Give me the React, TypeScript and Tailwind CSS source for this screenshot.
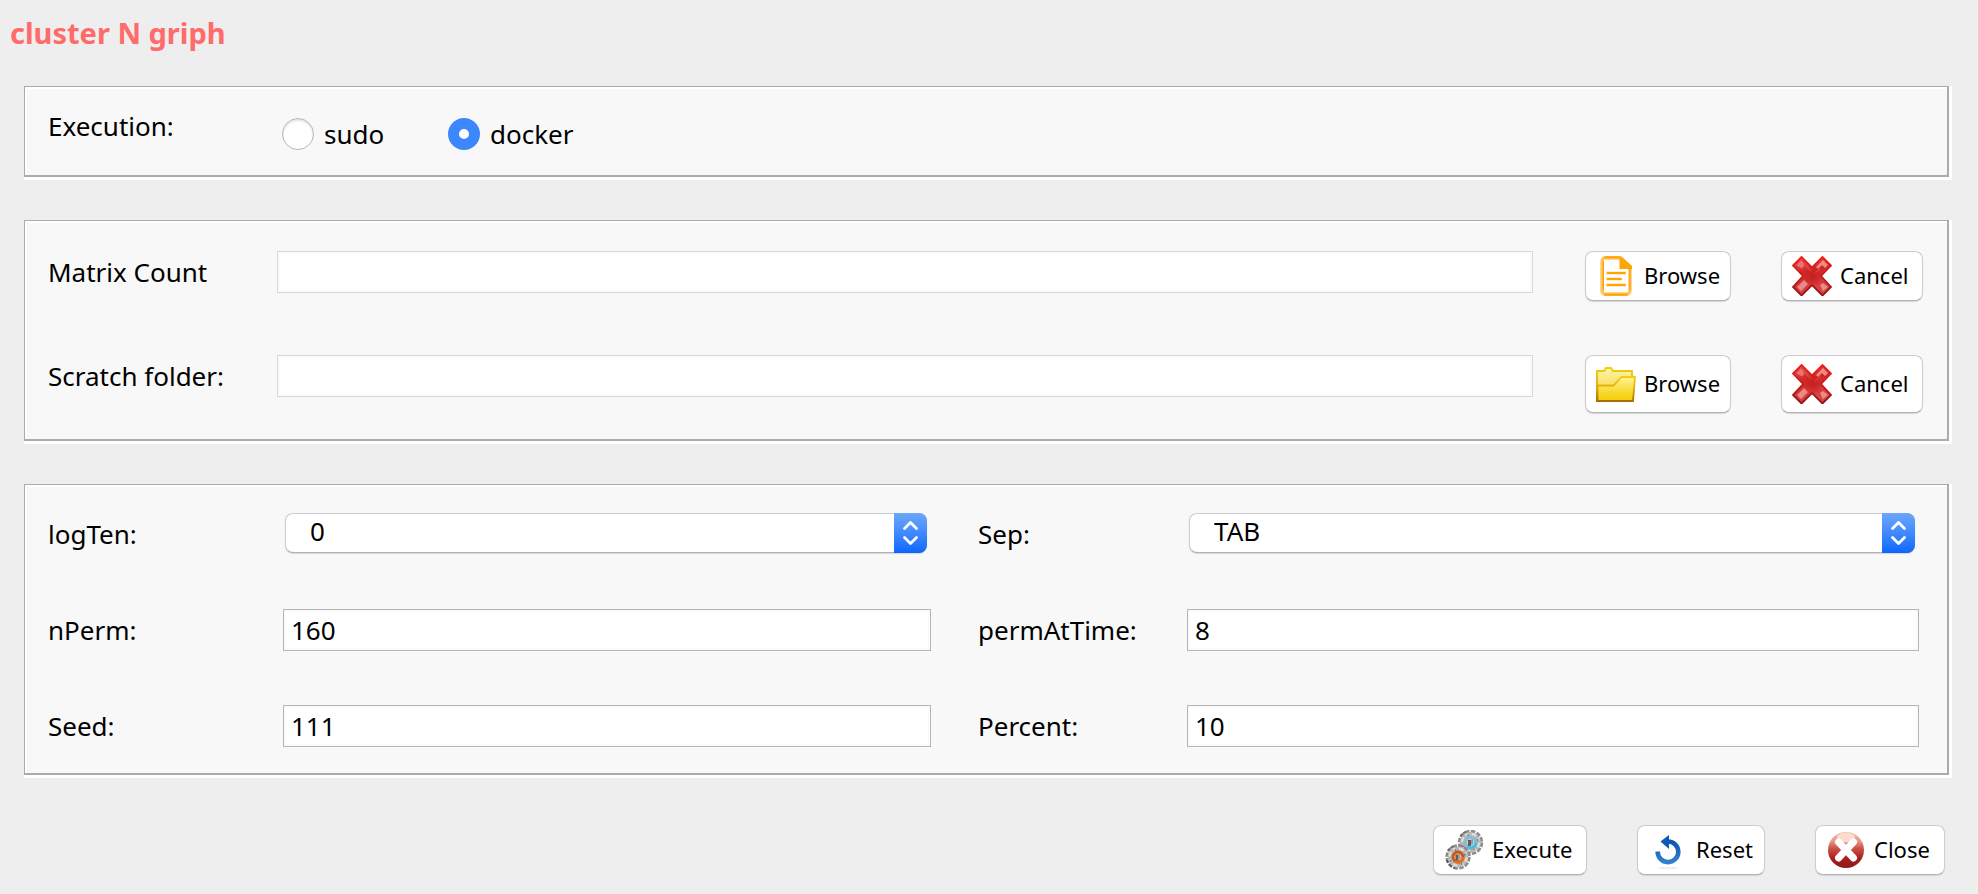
import { useState } from "react";
import type { ReactNode } from "react";

function Panel({ className, children }: { className: string; children: ReactNode }) {
  return (
    <div className="bg-white pr-[3px] pb-[3px]">
      <section
        className={`border-t border-r-2 border-b-2 border-l border-[#ababab] bg-[#f8f8f8] pl-[23px] shadow-[inset_2px_2px_0_#ffffff] ${className}`}
      >
        {children}
      </section>
    </div>
  );
}

function FileIcon() {
  return (
    <svg viewBox="0 0 40 40" className="size-10 shrink-0" aria-hidden="true">
      <path d="M9 2h15l10 10v22.500a3.500 3.500 0 0 1-3.500 3.500h-22A3.500 3.500 0 0 1 6 34.500V5A3 3 0 0 1 9 2z" fill="#fff" stroke="#ffc566" strokeWidth="3.400" />
      <path d="M9 1.200h14M9 38.800h22" stroke="#ffa500" strokeWidth="2" strokeLinecap="round" />
      <path d="M7.300 5v29.500M33.800 12v22.500" stroke="#ffa500" strokeWidth="1.400" />
      <path d="M23.500 0.500h2L36 10v3H23.500z" fill="#ffa500" />
      <path d="M10 17h20M10 23h16M10 29h20" stroke="#ffe7bd" strokeWidth="3.600" />
      <path d="M11.500 17h17.500M11.500 23h13.500M11.500 29h17.500" stroke="#ffa500" strokeWidth="2" strokeLinecap="round" />
    </svg>
  );
}

function FolderIcon() {
  return (
    <svg viewBox="0 0 40 40" className="size-10 shrink-0" aria-hidden="true">
      <defs>
        <linearGradient id="folder-back" x1="0" y1="0" x2="0" y2="1">
          <stop offset="0" stopColor="#fff3a6" />
          <stop offset="1" stopColor="#f3cf2e" />
        </linearGradient>
        <linearGradient id="folder-front" x1="0" y1="0" x2="0" y2="1">
          <stop offset="0" stopColor="#fff29a" />
          <stop offset="0.6" stopColor="#f9da32" />
          <stop offset="1" stopColor="#f5cc08" />
        </linearGradient>
        <linearGradient id="folder-edge" x1="0" y1="0" x2="0" y2="1">
          <stop offset="0" stopColor="#f1cf0c" />
          <stop offset="0.5" stopColor="#d9a90c" />
          <stop offset="1" stopColor="#a96c08" />
        </linearGradient>
      </defs>
      <path d="M1 7h7l2-3h5l2 3h19v30H1z" fill="url(#folder-back)" stroke="url(#folder-edge)" strokeWidth="1.800" />
      <path d="M1.500 21.500h16l8-8.500h13.500L37 37H1.500z" fill="url(#folder-front)" stroke="url(#folder-edge)" strokeWidth="1.800" />
    </svg>
  );
}

function CrossIcon() {
  return (
    <svg viewBox="0 0 40 40" className="size-10 shrink-0" aria-hidden="true">
      <defs>
        <linearGradient id="cross-fill" x1="0" y1="0" x2="0.300" y2="1">
          <stop offset="0" stopColor="#ec5450" />
          <stop offset="0.450" stopColor="#cf2626" />
          <stop offset="1" stopColor="#d84646" />
        </linearGradient>
        <linearGradient id="cross-edge" x1="0" y1="0" x2="0" y2="1">
          <stop offset="0" stopColor="#f02018" />
          <stop offset="0.500" stopColor="#c41a1a" />
          <stop offset="1" stopColor="#8e1616" />
        </linearGradient>
        <radialGradient id="cross-core">
          <stop offset="0" stopColor="#c81e20" />
          <stop offset="1" stopColor="#c81e20" stopOpacity="0" />
        </radialGradient>
      </defs>
      <path d="M9.500 1L20 11.500 30.500 1 39 9.500 29 20l10 11-8.500 8.500L20 29 9.500 39.500 1 31l10-11L1 9.500z" fill="url(#cross-fill)" stroke="url(#cross-edge)" strokeWidth="1.800" />
      <path d="M5 31l7-7 4 4-7 7zM28 29l3-2 5 4-5 4z" fill="#f3a9a9" opacity="0.700" />
      <path d="M4.500 9.500l4.500-5 4 4-3 4z" fill="#f28a86" opacity="0.700" />
      <path d="M24 11l7-7 5 5-3 3-3-3-4 4z" fill="#fab4b0" opacity="0.700" />
      <path d="M12 7l7 8M28 13l-6 5" stroke="#e04442" strokeWidth="2" />
      <circle cx="21" cy="20" r="10" fill="url(#cross-core)" />
    </svg>
  );
}

function Gear({ cx, cy, ring, glow }: { cx: number; cy: number; ring: string; glow: string }) {
  return (
    <g transform={`translate(${cx} ${cy})`}>
      <circle r="11.200" fill="none" stroke="#8b8b8b" strokeWidth="3" strokeDasharray="4.400 1.465" />
      <path d="M-11 3A11.500 11.500 0 0 0-3 11" fill="none" stroke="#5a5a5a" strokeWidth="2" strokeDasharray="3 2" />
      <path d="M-10-6A12 12 0 0 1-4-11" fill="none" stroke="#666" strokeWidth="2" strokeDasharray="2.500 2" />
      <circle r="10.400" fill="#b4b4b4" />
      <circle r="8.600" fill="none" stroke="#dcdcdc" strokeWidth="2.400" strokeDasharray="5 2.500 3 3.300" />
      <path d="M-8.500 4.500l2-1M4 8l-1-2M8-3l-2 1M-3-8l1 2" stroke="#7c7c7c" strokeWidth="1.400" />
      <circle r="5" fill="#d6d6d6" stroke={ring} strokeWidth="2.800" />
      <path d="M-3 4.500A5.500 5.500 0 0 0 5.500 0" stroke={glow} strokeWidth="2.400" fill="none" />
      <path d="M-2.500-2.500h3v6h-3z" fill="#6b5a52" />
      <path d="M0.500-3h2v5h-2z" fill="#9a9a9a" />
    </g>
  );
}

function GearsIcon() {
  return (
    <svg viewBox="0 0 40 40" className="size-10 shrink-0" aria-hidden="true">
      <Gear cx={26.500} cy={12.500} ring="#84bfd6" glow="#35bdf0" />
      <Gear cx={14} cy={27} ring="#cf5612" glow="#ee6c1c" />
    </svg>
  );
}

function ResetIcon() {
  return (
    <svg viewBox="0 0 40 40" className="size-10 shrink-0" aria-hidden="true">
      <defs>
        <linearGradient id="reset-fill" x1="0" y1="0" x2="0" y2="1">
          <stop offset="0" stopColor="#0a58b0" />
          <stop offset="1" stopColor="#3380cc" />
        </linearGradient>
      </defs>
      <ellipse cx="20" cy="38" rx="10" ry="1.300" fill="#efefef" />
      <path d="M20 11.500a10.300 10.300 0 1 1-10.300 10" fill="none" stroke="url(#reset-fill)" strokeWidth="4.600" />
      <path d="M21 5v14L12.500 11.500z" fill="#0c5ab3" />
    </svg>
  );
}

function CloseIcon() {
  return (
    <svg viewBox="0 0 40 40" className="size-10 shrink-0" aria-hidden="true">
      <defs>
        <linearGradient id="close-fill" x1="0" y1="0" x2="0" y2="1">
          <stop offset="0" stopColor="#f6b9a4" />
          <stop offset="0.250" stopColor="#e59a86" />
          <stop offset="0.450" stopColor="#cc5446" />
          <stop offset="0.750" stopColor="#a81c1a" />
          <stop offset="1" stopColor="#8c1c1a" />
        </linearGradient>
      </defs>
      <circle cx="20" cy="20" r="18" fill="url(#close-fill)" />
      <ellipse cx="20" cy="7.500" rx="9" ry="5" fill="#fddccd" />
      <path d="M12.500 12l15 16M27.500 12l-15 16" stroke="#fff" strokeWidth="7" strokeLinecap="round" />
    </svg>
  );
}

function PushButton({ icon, label, className }: { icon: ReactNode; label: string; className: string }) {
  return (
    <button
      type="button"
      className={`flex shrink-0 items-center gap-2 rounded-lg border border-[#cdcdcd] border-b-[#b4b4b4] bg-white pb-px pl-[10px] text-[22px] leading-7 whitespace-nowrap shadow-[0_1px_1px_#d5d5d5] ${className}`}
    >
      {icon}
      <span className="pb-0.5">{label}</span>
    </button>
  );
}

function FileRow({ id, label, icon, buttonHeight }: { id: string; label: string; icon: ReactNode; buttonHeight: string }) {
  return (
    <div className="flex items-start">
      <label htmlFor={id} className="w-[229px] shrink-0 leading-[42px]">
        {label}
      </label>
      <input
        id={id}
        type="text"
        className="h-[42px] min-w-0 flex-1 border border-[#d8d8d8] bg-white px-2 shadow-[inset_0_0_0_2px_#fbfbfb] outline-none"
      />
      <PushButton icon={icon} label="Browse" className={`ml-[52px] w-[146px] ${buttonHeight}`} />
      <PushButton icon={<CrossIcon />} label="Cancel" className={`ml-[50px] w-[142px] ${buttonHeight}`} />
    </div>
  );
}

function TextField({ id, value }: { id: string; value: string }) {
  return (
    <input
      id={id}
      type="text"
      defaultValue={value}
      className="h-[42px] w-full min-w-0 border border-[#b6b6b6] bg-white px-[7px] shadow-[inset_0_0_0_2px_#fafafa] outline-none"
    />
  );
}

function SelectField({ id, options }: { id: string; options: string[] }) {
  return (
    <div className="relative mr-1 ml-0.5 h-10">
      <select
        id={id}
        className="block h-10 w-full appearance-none rounded-lg border border-[#cdcdcd] border-b-[#b0b0b0] bg-white pr-10 pb-1 pl-6 leading-[34px] shadow-[0_1px_1px_#d8d8d8] outline-none"
      >
        {options.map((option) => (
          <option key={option}>{option}</option>
        ))}
      </select>
      <span className="pointer-events-none absolute inset-y-0 right-0 flex w-[33px] items-center justify-center rounded-r-lg bg-linear-to-b from-[#6ba6fb] to-[#0767fd]">
        <svg viewBox="0 0 33 40" className="h-10 w-[33px]" fill="none" stroke="#fff" strokeWidth="2.800" strokeLinecap="round" strokeLinejoin="round" aria-hidden="true">
          <path d="M10.500 15.500l6-6 6 6M10.500 24.500l6 6 6-6" />
        </svg>
      </span>
    </div>
  );
}

const modes = ["sudo", "docker"];

export default function App() {
  const [mode, setMode] = useState("docker");

  return (
    <main className="min-h-screen bg-[#eeeeee] pt-[13px] pr-[26px] pb-4 pl-6 font-['Noto_Sans',sans-serif] text-[26px] text-black">
      <h1 className="-ml-3.5 text-[29px] leading-10 font-bold text-[#ff6b6b]">cluster N griph</h1>

      <form className="mt-[33px] flex flex-col gap-10" onSubmit={(event) => event.preventDefault()}>
        <Panel className="flex items-start pt-[23px] pb-[25px]">
          <span id="execution-label" className="w-[234px] shrink-0 leading-8">
            Execution:
          </span>
          <div role="radiogroup" aria-labelledby="execution-label" className="mt-2 flex">
            {modes.map((name) => (
              <label key={name} className="flex w-[166px] items-center gap-2.5 leading-8">
                <input
                  type="radio"
                  name="mode"
                  value={name}
                  checked={mode === name}
                  onChange={() => setMode(name)}
                  className="size-8 shrink-0 appearance-none rounded-full border border-[#b8b8b8] bg-white shadow-[inset_0_2px_2px_#e4e4e4] checked:border-[11px] checked:border-[#3b88fd] checked:shadow-none"
                />
                {name}
              </label>
            ))}
          </div>
        </Panel>

        <Panel className="flex flex-col gap-[54px] pt-[30px] pr-6 pb-[26px]">
          <FileRow id="matrix" label="Matrix Count" icon={<FileIcon />} buttonHeight="h-[50px]" />
          <FileRow id="scratch" label="Scratch folder:" icon={<FolderIcon />} buttonHeight="h-[58px]" />
        </Panel>

        <Panel className="grid grid-cols-[235px_minmax(0,648fr)_256px_minmax(0,732fr)] gap-y-[54px] pt-7 pr-7 pb-[26px] leading-[42px]">
          <label htmlFor="logTen">logTen:</label>
          <SelectField id="logTen" options={["0", "1"]} />
          <label htmlFor="sep" className="pl-[47px]">Sep:</label>
          <SelectField id="sep" options={["TAB", "COMMA"]} />

          <label htmlFor="nPerm">nPerm:</label>
          <TextField id="nPerm" value="160" />
          <label htmlFor="permAtTime" className="pl-[47px]">permAtTime:</label>
          <TextField id="permAtTime" value="8" />

          <label htmlFor="seed">Seed:</label>
          <TextField id="seed" value="111" />
          <label htmlFor="percent" className="pl-[47px]">Percent:</label>
          <TextField id="percent" value="10" />
        </Panel>

        <div className="mt-[7px] flex justify-end gap-[50px] pr-[7px]">
          <PushButton icon={<GearsIcon />} label="Execute" className="h-[50px] w-[154px]" />
          <PushButton icon={<ResetIcon />} label="Reset" className="h-[50px] w-[128px]" />
          <PushButton icon={<CloseIcon />} label="Close" className="h-[50px] w-[130px]" />
        </div>
      </form>
    </main>
  );
}
